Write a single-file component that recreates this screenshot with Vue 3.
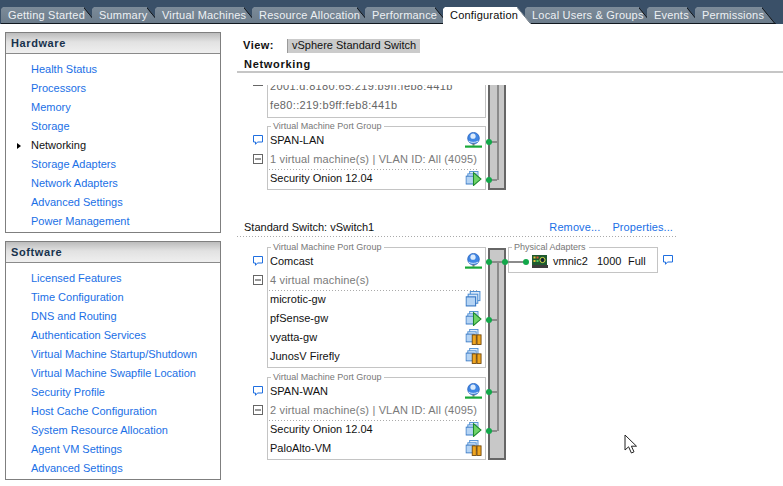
<script setup>
const tabs = [
  { label: 'Getting Started', width: 97 },
  { label: 'Summary', width: 69 },
  { label: 'Virtual Machines', width: 103 },
  { label: 'Resource Allocation', width: 119 },
  { label: 'Performance', width: 84 },
  { label: 'Configuration', width: 88, active: true },
  { label: 'Local Users & Groups', width: 128 },
  { label: 'Events', width: 54 },
  { label: 'Permissions', width: 81 }
]
const panels = [
  {
    title: 'Hardware',
    items: ['Health Status', 'Processors', 'Memory', 'Storage', 'Networking', 'Storage Adapters', 'Network Adapters', 'Advanced Settings', 'Power Management']
  },
  {
    title: 'Software',
    items: ['Licensed Features', 'Time Configuration', 'DNS and Routing', 'Authentication Services', 'Virtual Machine Startup/Shutdown', 'Virtual Machine Swapfile Location', 'Security Profile', 'Host Cache Configuration', 'System Resource Allocation', 'Agent VM Settings', 'Advanced Settings']
  }
]
const lanGroup = {
  name: 'SPAN-LAN',
  count: '1 virtual machine(s) | VLAN ID: All (4095)',
  vms: [{ name: 'Security Onion 12.04', icon: 'vm-on' }]
}
const wanGroups = [
  {
    name: 'Comcast',
    count: '4 virtual machine(s)',
    vms: [
      { name: 'microtic-gw', icon: 'vm-off' },
      { name: 'pfSense-gw', icon: 'vm-on' },
      { name: 'vyatta-gw', icon: 'vm-pause' },
      { name: 'JunosV Firefly', icon: 'vm-pause' }
    ]
  },
  {
    name: 'SPAN-WAN',
    count: '2 virtual machine(s) | VLAN ID: All (4095)',
    vms: [
      { name: 'Security Onion 12.04', icon: 'vm-on' },
      { name: 'PaloAlto-VM', icon: 'vm-pause' }
    ]
  }
]
const firstNodes = [
  { x: 252, y: 57 },
  { x: 252, y: 95 }
]
const secondNodes = [
  { x: 252, y: 15 },
  { x: 268, y: 15 },
  { x: 289, y: 15 },
  { x: 252, y: 73 },
  { x: 252, y: 145 },
  { x: 252, y: 184 }
]
const secondStubs = [
  { x: 249, y: 15, w: 42 },
  { x: 249, y: 73, w: 11 },
  { x: 249, y: 145, w: 11 },
  { x: 249, y: 184, w: 11 }
]
</script>

<template>
  <div class="app">
    <svg class="defs" width="0" height="0" aria-hidden="true">
      <defs>
        <symbol id="bubble" viewBox="0 0 10 10">
          <path d="M.5 .5h9v6.5H4.5L2.5 9.3V7H.5z" fill="#fff" stroke="#1f6fe0" stroke-width="1" />
        </symbol>
        <symbol id="minus" viewBox="0 0 10 10">
          <rect x=".5" y=".5" width="9" height="9" fill="#fff" stroke="#666" />
          <path d="M2 5h6" stroke="#333" stroke-width="1" />
        </symbol>
        <symbol id="globe" viewBox="0 0 17 16">
          <circle cx="8.5" cy="6.2" r="5.8" fill="#3f86e4" stroke="#2a63bd" stroke-width=".8" />
          <circle cx="8" cy="4.2" r="2.6" fill="#dcebfb" />
          <path d="M4 9.2c2 1.6 6 1.6 9 0" stroke="#cfe3f9" fill="none" />
          <rect x="7.5" y="11.5" width="2" height="2.2" fill="#777" />
          <rect x="0" y="13.5" width="17" height="2.2" fill="#19a838" />
        </symbol>
        <symbol id="stack" viewBox="0 0 15 15">
          <rect x="4.5" y=".5" width="9" height="8.5" fill="#e3eefa" stroke="#4f8fd4" />
          <rect x="2.5" y="3" width="9" height="8.5" fill="#d5e6f8" stroke="#4f8fd4" />
          <rect x=".5" y="5.5" width="9" height="8.5" fill="#b5d4f4" stroke="#3274c2" />
        </symbol>
        <symbol id="vm-off" viewBox="0 0 15 15">
          <use href="#stack" width="15" height="15" />
        </symbol>
        <symbol id="vm-on" viewBox="0 0 15 15">
          <use href="#stack" width="13" height="13" y="1" />
          <path d="M7.5 2.5 14.5 8.5 7.5 14.5z" fill="#6fd468" stroke="#1d8a2e" stroke-width="1" />
        </symbol>
        <symbol id="vm-pause" viewBox="0 0 15 15">
          <use href="#stack" width="13" height="13" />
          <rect x="6.3" y="5.5" width="3.8" height="9" fill="#efa51f" stroke="#6b4208" stroke-width=".8" />
          <rect x="10.8" y="5.5" width="3.8" height="9" fill="#efa51f" stroke="#6b4208" stroke-width=".8" />
        </symbol>
        <symbol id="nic" viewBox="0 0 17 13">
          <rect x="1" y="0" width="15" height="11" fill="#1e5a30" />
          <rect x="1" y="10" width="16" height="3" fill="#3c3c3c" />
          <rect x="2.5" y="1.5" width="2" height="2" fill="#e6c23a" />
          <rect x="5.5" y="1.5" width="2" height="2" fill="#e05a3a" />
          <rect x="2.5" y="5" width="2" height="2" fill="#e6c23a" />
          <rect x="5.5" y="5" width="2" height="2" fill="#55c95a" />
          <circle cx="11.5" cy="5" r="2.6" fill="#123" stroke="#d7e04a" />
        </symbol>
      </defs>
    </svg>

    <nav class="tabs">
      <div
        v-for="tab in tabs"
        :key="tab.label"
        class="tab"
        :class="{ active: tab.active }"
        :style="{ width: tab.width + 'px' }"
      >{{ tab.label }}</div>
    </nav>

    <div class="body">
      <aside class="sidebar">
        <section v-for="panel in panels" :key="panel.title" class="panel">
          <h2 class="panel-title">{{ panel.title }}</h2>
          <ul class="panel-list">
            <li v-for="item in panel.items" :key="item" :class="{ current: item === 'Networking' }">{{ item }}</li>
          </ul>
        </section>
      </aside>

      <main class="main">
        <div class="view-row">
          <span class="view-label">View:</span>
          <span class="view-value">vSphere Standard Switch</span>
        </div>
        <div class="heading">Networking</div>

        <div class="canvas">
          <div class="switch first">
            <div class="groups">
              <div class="group clipped">
                <div class="gutter">
                  <svg class="gut-icon"><use href="#minus" /></svg>
                  <span class="gut-empty"></span>
                </div>
                <div class="box">
                  <div class="row"><span class="dim">2001:d:8180:65:219:b9ff:feb8:441b</span></div>
                  <div class="row"><span class="dim">fe80::219:b9ff:feb8:441b</span></div>
                </div>
              </div>
              <div class="group">
                <div class="gutter">
                  <svg class="gut-icon"><use href="#bubble" /></svg>
                  <svg class="gut-icon"><use href="#minus" /></svg>
                </div>
                <div class="box">
                  <span class="legend">Virtual Machine Port Group</span>
                  <div class="row">
                    <span>{{ lanGroup.name }}</span>
                    <svg class="row-icon"><use href="#globe" /></svg>
                  </div>
                  <div class="row count"><span>{{ lanGroup.count }}</span></div>
                  <div v-for="vm in lanGroup.vms" :key="vm.name" class="row">
                    <span>{{ vm.name }}</span>
                    <svg class="row-icon"><use :href="'#' + vm.icon" /></svg>
                  </div>
                </div>
              </div>
            </div>
            <div class="spine"></div>
            <span class="vwire" style="height: 95px; top: 0"></span>
            <span v-for="n in firstNodes" :key="n.y" class="hwire" :style="{ left: '249px', top: n.y + 'px', width: '11px' }"></span>
            <span v-for="n in firstNodes" :key="'n' + n.y" class="node" :style="{ left: n.x + 'px', top: n.y + 'px' }"></span>
          </div>

          <div class="switch-head">
            <span>Standard Switch: vSwitch1</span>
            <span class="actions"><a>Remove...</a><a>Properties...</a></span>
          </div>

          <div class="switch second">
            <div class="groups">
              <div v-for="g in wanGroups" :key="g.name" class="group">
                <div class="gutter">
                  <svg class="gut-icon"><use href="#bubble" /></svg>
                  <svg class="gut-icon"><use href="#minus" /></svg>
                </div>
                <div class="box">
                  <span class="legend">Virtual Machine Port Group</span>
                  <div class="row">
                    <span>{{ g.name }}</span>
                    <svg class="row-icon"><use href="#globe" /></svg>
                  </div>
                  <div class="row count"><span>{{ g.count }}</span></div>
                  <div v-for="vm in g.vms" :key="vm.name" class="row">
                    <span>{{ vm.name }}</span>
                    <svg class="row-icon"><use :href="'#' + vm.icon" /></svg>
                  </div>
                </div>
              </div>
            </div>
            <div class="spine"></div>
            <div class="adapters">
              <div class="adapter-box">
                <span class="legend">Physical Adapters</span>
                <svg class="nic"><use href="#nic" /></svg>
                <span class="nic-name">vmnic2</span>
                <span class="nic-speed">1000</span>
                <span class="nic-duplex">Full</span>
              </div>
              <svg class="gut-icon adapter-bubble"><use href="#bubble" /></svg>
            </div>
            <span class="vwire" style="height: 169px; top: 15px"></span>
            <span v-for="s in secondStubs" :key="s.y" class="hwire" :style="{ left: s.x + 'px', top: s.y + 'px', width: s.w + 'px' }"></span>
            <span v-for="n in secondNodes" :key="n.x + '-' + n.y" class="node" :style="{ left: n.x + 'px', top: n.y + 'px' }"></span>
          </div>
        </div>
      </main>
    </div>

    <svg class="cursor" width="14" height="21" viewBox="0 0 14 21">
      <path d="M1 1v15l3.6-3.2L7.4 19l2.6-1.2-2.6-5.6H12.5z" fill="#fff" stroke="#222" stroke-width="1" />
    </svg>
  </div>
</template>

<style>
html, body { margin: 0; background: #fff; }
</style>

<style scoped>
.app {
  position: relative;
  width: 783px;
  height: 486px;
  overflow: hidden;
  background: #fff;
  font-family: "Liberation Sans", Arial, sans-serif;
  font-size: 11px;
  color: #111;
}
.defs { position: absolute; }

.tabs {
  display: flex;
  height: 24px;
  padding: 7px 0 0 1px;
  box-sizing: border-box;
  background: #3a5068;
}
.tab {
  position: relative;
  flex: none;
  height: 17px;
  margin-right: -6px;
  padding-left: 7px;
  box-sizing: border-box;
  line-height: 16px;
  font-size: 11px;
  letter-spacing: .2px;
  white-space: nowrap;
  color: #eef1f4;
  background: linear-gradient(#7c8b99, #6c7c8b);
  border-bottom: 1px solid #10171e;
  clip-path: polygon(0 2px, 2px 0, calc(100% - 14px) 0, 100% 100%, 0 100%);
}
.tab::after {
  content: "";
  position: absolute;
  top: 0;
  right: 0;
  bottom: -1px;
  width: 14px;
  background: linear-gradient(to top right, transparent 44%, #12181f 47%, #12181f 51%, transparent 52%);
}
.tab.active {
  z-index: 2;
  color: #0b0b0b;
  background: #fff;
  border-bottom-color: #fff;
}
.tab.active::after {
  background: linear-gradient(to top right, transparent 46%, #5a6570 49%, #5a6570 51%, transparent 52%);
}

.body { display: flex; }

.sidebar {
  flex: none;
  width: 216px;
  margin: 8px 0 0 5px;
  display: flex;
  flex-direction: column;
  gap: 8px;
}
.panel {
  border: 1px solid #7f7f7f;
  padding-bottom: 1px;
}
.panel-title {
  margin: 0;
  height: 20px;
  padding-left: 5px;
  line-height: 21px;
  font-size: 11px;
  font-weight: 700;
  letter-spacing: .6px;
  color: #17324d;
  background: linear-gradient(#bcbcbc, #e2e2e2 45%, #efefef);
  border-bottom: 1px solid #8a8a8a;
}
.panel-list {
  list-style: none;
  margin: 0;
  padding: 6px 0 0 25px;
}
.panel-list li {
  position: relative;
  height: 19px;
  line-height: 19px;
  color: #1a6fe6;
  white-space: nowrap;
}
.panel-list li.current { color: #111; }
.panel-list li.current::before {
  content: "";
  position: absolute;
  left: -14px;
  top: 7px;
  border-left: 4px solid #000;
  border-top: 3px solid transparent;
  border-bottom: 3px solid transparent;
}

.main {
  flex: none;
  width: 546px;
  margin-left: 16px;
}
.view-row {
  display: flex;
  height: 14px;
  margin-top: 15px;
  line-height: 13px;
}
.view-label {
  flex: none;
  width: 50px;
  padding-left: 6px;
  box-sizing: border-box;
  font-weight: 700;
  letter-spacing: .5px;
}
.view-value {
  display: block;
  width: 133px;
  height: 14px;
  padding-left: 4px;
  box-sizing: border-box;
  background: #cbcbcb;
  border-left: 1px solid #9a9a9a;
  white-space: nowrap;
}
.heading {
  height: 20px;
  padding: 4px 0 0 7px;
  box-sizing: border-box;
  line-height: 15px;
  font-weight: 700;
  letter-spacing: .7px;
  border-bottom: 2px solid #c6c6c6;
}
.canvas {
  height: 401px;
  margin-top: 12px;
  overflow: hidden;
}

.switch {
  position: relative;
  display: flex;
  align-items: stretch;
}
.groups {
  flex: none;
  width: 249px;
  display: flex;
  flex-direction: column;
}
.first .groups { gap: 8px; }
.second .groups { gap: 9px; }

.group { display: flex; }
.group.clipped {
  height: 33px;
  overflow: hidden;
  align-items: flex-end;
}
.gutter {
  flex: none;
  width: 30px;
  padding: 4px 0 0 16px;
  box-sizing: border-box;
}
.clipped .gutter { padding-bottom: 4px; }
.gut-icon {
  display: block;
  width: 10px;
  height: 10px;
  margin: 5px 0 9px;
}
.gut-empty { display: block; height: 19px; }

.box {
  position: relative;
  flex: 1;
  padding: 3px 0 2px;
  border: 1px solid #c4c4c4;
}
.clipped .box { border-top: 0; padding: 0 0 3px; }
.legend {
  position: absolute;
  left: 3px;
  top: -6px;
  padding: 0 3px 0 2px;
  background: #fff;
  font-size: 9px;
  line-height: 11px;
  color: #777;
  white-space: nowrap;
}
.row {
  position: relative;
  display: flex;
  align-items: center;
  justify-content: space-between;
  height: 19px;
  padding: 0 3px 0 2px;
  white-space: nowrap;
}
.dim { color: #666; letter-spacing: .35px; }
.count { color: #7a7a7a; letter-spacing: .16px; }
.count::after {
  content: "";
  position: absolute;
  left: 1px;
  right: 6px;
  bottom: -2px;
  height: 1px;
  background: repeating-linear-gradient(90deg, #aaa 0 1px, transparent 1px 3px);
}
.row-icon {
  width: 17px;
  height: 16px;
  flex: none;
}

.spine {
  flex: none;
  width: 14px;
  margin-left: 2px;
  background: #c8c8c8;
  border: 2px solid #666;
  border-top-width: 0;
}
.second .spine { border-top-width: 2px; margin-top: 1px; }

.vwire, .hwire {
  position: absolute;
  background: #8b8b8b;
}
.vwire { left: 260px; width: 2px; }
.hwire { height: 2px; margin-top: -1px; }
.node {
  position: absolute;
  width: 6px;
  height: 6px;
  margin: -3px 0 0 -3px;
  border-radius: 50%;
  background: #13a84a;
}

.switch-head {
  display: flex;
  justify-content: space-between;
  width: 439px;
  height: 19px;
  margin-top: 28px;
  margin-bottom: 10px;
  padding: 0 3px 1px 7px;
  box-sizing: border-box;
  line-height: 18px;
  background: repeating-linear-gradient(90deg, #aaa 0 1px, transparent 1px 3px) left bottom / 100% 1px no-repeat;
}
.actions { display: flex; gap: 12px; letter-spacing: .1px; }
.actions a { color: #1a6fe6; }

.adapters {
  display: flex;
  align-items: flex-start;
  margin-left: 2px;
}
.adapter-box {
  position: relative;
  display: flex;
  align-items: center;
  width: 150px;
  height: 26px;
  padding: 2px 0 0 23px;
  box-sizing: border-box;
  border: 1px solid #c4c4c4;
  white-space: nowrap;
}
.nic { width: 17px; height: 13px; flex: none; margin-left: -1px; }
.nic-name { margin-left: 5px; width: 44px; flex: none; }
.nic-speed { width: 31px; flex: none; }
.adapter-bubble { margin: 8px 0 0 5px; }

.cursor {
  position: absolute;
  left: 624px;
  top: 434px;
}
</style>
